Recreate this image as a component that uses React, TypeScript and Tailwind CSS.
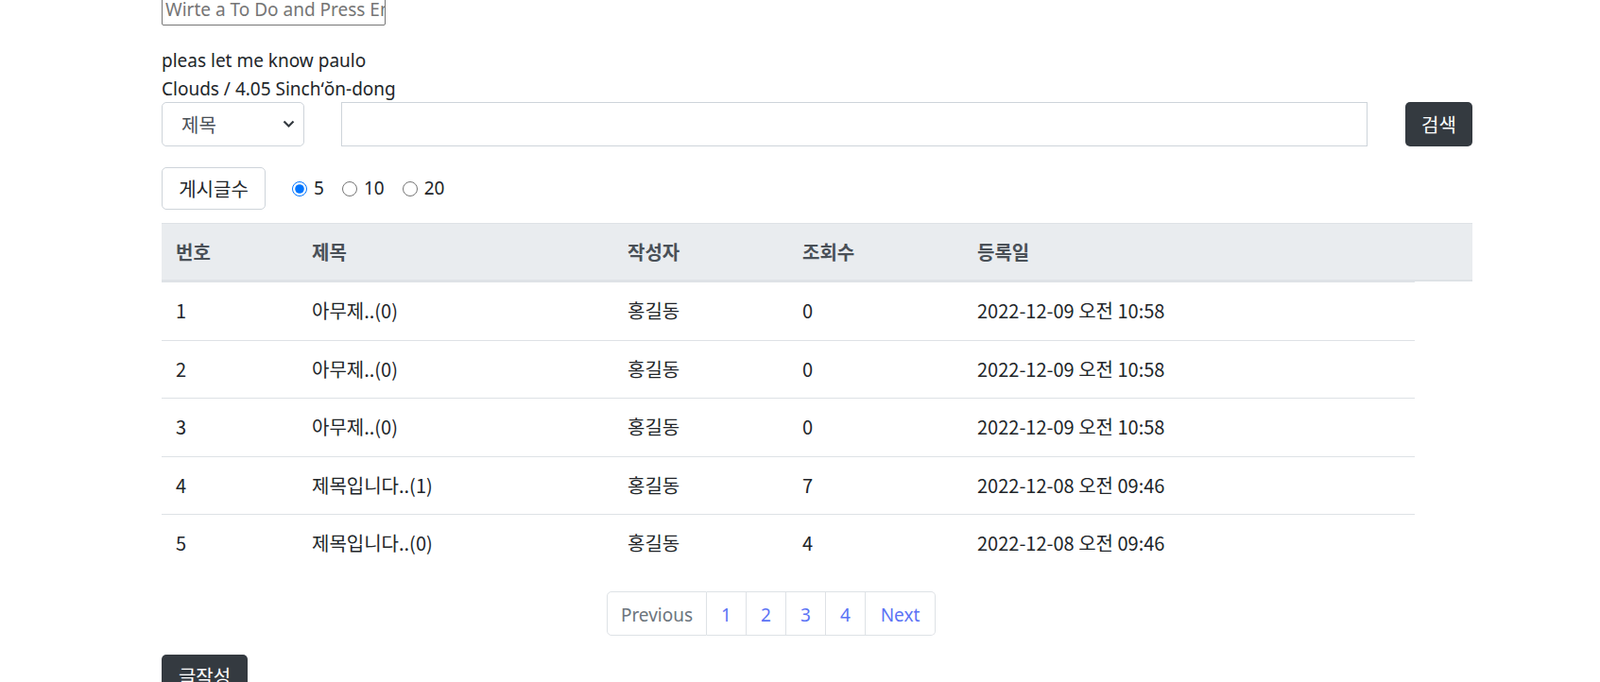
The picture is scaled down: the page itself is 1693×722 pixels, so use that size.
import React from 'react';

interface Post {
  no: number;
  title: string;
  writer: string;
  hits: number;
  date: string;
}

const posts: Post[] = [
  { no: 1, title: '아무제..(0)', writer: '홍길동', hits: 0, date: '2022-12-09 오전 10:58' },
  { no: 2, title: '아무제..(0)', writer: '홍길동', hits: 0, date: '2022-12-09 오전 10:58' },
  { no: 3, title: '아무제..(0)', writer: '홍길동', hits: 0, date: '2022-12-09 오전 10:58' },
  { no: 4, title: '제목입니다..(1)', writer: '홍길동', hits: 7, date: '2022-12-08 오전 09:46' },
  { no: 5, title: '제목입니다..(0)', writer: '홍길동', hits: 4, date: '2022-12-08 오전 09:46' },
];

const App: React.FC = () => {
  return (
    <div className="min-h-screen bg-white text-[#212529] font-['Noto_Sans','Noto_Sans_CJK_KR',sans-serif] text-[19px]">
      <div className="ml-[171px] w-[1387px] -mt-[9px]">
        <input
          type="text"
          placeholder="Wirte a To Do and Press Enter"
          className="block w-[237px] h-[36px] pl-[3px] pr-0 pt-[2px] border border-[#767676] rounded-[2px] text-[19px] placeholder:text-[#757575] outline-none"
        />

        <div className="mt-[22px] leading-[30px]">
          <div>pleas let me know paulo</div>
          <div>Clouds / 4.05 Sinch&#x02BB;ŏn-dong</div>
        </div>

        <div className="flex items-center h-[47px] -mt-[1px]">
          <div className="relative w-[151px] h-[47px]">
            <select className="appearance-none w-full h-full pl-[20px] pr-[36px] border border-[#ced4da] rounded-[5px] bg-white text-[#495057] text-[20px] font-['Noto_Sans_CJK_KR',sans-serif] outline-none">
              <option>제목</option>
              <option>내용</option>
              <option>작성자</option>
            </select>
            <svg className="absolute right-[10px] top-[19px] pointer-events-none" width="13" height="9" viewBox="0 0 13 9">
              <path d="M1.5 1.5 L6.5 6.5 L11.5 1.5" fill="none" stroke="#343a40" strokeWidth="2.2" />
            </svg>
          </div>
          <input
            type="text"
            className="ml-[39px] w-[1086px] h-[47px] px-[15px] border border-[#ced4da] bg-white outline-none"
          />
          <button className="ml-auto w-[71px] h-[47px] rounded-[5px] bg-[#343a40] text-white text-[20px] font-['Noto_Sans_CJK_KR',sans-serif]">
            검색
          </button>
        </div>

        <div className="flex items-center mt-[22px] h-[45px]">
          <button className="w-[110px] h-[45px] border border-[#ced4da] rounded-[5px] bg-white text-[20px] text-[#212529] font-['Noto_Sans_CJK_KR',sans-serif]">
            게시글수
          </button>
          <label className="flex items-center ml-[28px] gap-[7px]">
            <input type="radio" name="cnt" defaultChecked className="w-[16px] h-[16px] m-0 accent-[#0075ff]" />
            <span>5</span>
          </label>
          <label className="flex items-center ml-[19px] gap-[7px]">
            <input type="radio" name="cnt" className="w-[16px] h-[16px] m-0" />
            <span>10</span>
          </label>
          <label className="flex items-center ml-[19px] gap-[7px]">
            <input type="radio" name="cnt" className="w-[16px] h-[16px] m-0" />
            <span>20</span>
          </label>
        </div>

        <div className="mt-[14px] font-['Noto_Sans_CJK_KR',sans-serif] text-[20px]">
          <div className="flex items-center h-[62px] bg-[#e9ecef] border-t border-b-2 border-[#dee2e6] font-bold text-[#495057]">
            <div className="w-[144px] px-[15px]">번호</div>
            <div className="w-[334px] px-[15px]">제목</div>
            <div className="w-[185px] px-[15px]">작성자</div>
            <div className="w-[185px] px-[15px]">조회수</div>
            <div className="flex-1 px-[15px]">등록일</div>
          </div>
          {posts.map((p) => (
            <div key={p.no} className="flex items-center w-[1326px] h-[61.5px] border-t border-[#dee2e6]">
              <div className="w-[144px] px-[15px]">{p.no}</div>
              <div className="w-[334px] px-[15px]">{p.title}</div>
              <div className="w-[185px] px-[15px]">{p.writer}</div>
              <div className="w-[185px] px-[15px]">{p.hits}</div>
              <div className="flex-1 px-[15px]">{p.date}</div>
            </div>
          ))}
        </div>

        <div className="flex mt-[20px] ml-[471px] h-[47px] text-[19px]">
          <div className="flex items-center justify-center w-[106px] pt-[4px] border border-[#dee2e6] rounded-l-[5px] text-[#6c757d]">
            Previous
          </div>
          {[1, 2, 3, 4].map((n) => (
            <a key={n} className="flex items-center justify-center w-[42px] pt-[4px] border border-l-0 border-[#dee2e6] text-[#5b73f5]">
              {n}
            </a>
          ))}
          <a className="flex items-center justify-center w-[74px] pt-[4px] border border-l-0 border-[#dee2e6] rounded-r-[5px] text-[#5b73f5]">
            Next
          </a>
        </div>

        <button className="mt-[20px] w-[91px] h-[47px] rounded-[5px] bg-[#343a40] text-white text-[20px] font-['Noto_Sans_CJK_KR',sans-serif]">
          글작성
        </button>
      </div>
    </div>
  );
};

export default App;
